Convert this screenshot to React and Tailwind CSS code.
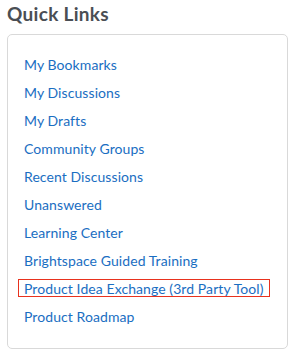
const LINKS = [
  'My Bookmarks',
  'My Discussions',
  'My Drafts',
  'Community Groups',
  'Recent Discussions',
  'Unanswered',
  'Learning Center',
  'Brightspace Guided Training',
  'Product Idea Exchange (3rd Party Tool)',
  'Product Roadmap',
]

export default function App() {
  return (
    <div className="w-[301px] h-[358px] bg-white px-[7px] pt-[3px]" style={{ fontFamily: 'Lato, "Open Sans", sans-serif' }}>
      <h2 className="text-[19px] leading-[22px] font-bold tracking-[0.3px] text-[#4a4e54]">Quick Links</h2>
      <div className="mt-[9px] w-[281px] h-[315px] border border-[#d9d9d9] rounded-[5px] pl-[16px] pt-[15px]">
        <ul>
          {LINKS.map((l, i) => (
            <li key={l} className="h-[28px] flex items-center tracking-[0.08px]">
              {i === 8 ? (
                <a href="#" className="-ml-[6px] px-[5px] h-[18px] flex items-center border border-[#e8321e] text-[14px] text-[#1a6ec2]">
                  {l}
                </a>
              ) : (
                <a href="#" className="text-[14px] text-[#1a6ec2]">{l}</a>
              )}
            </li>
          ))}
        </ul>
      </div>
    </div>
  )
}
